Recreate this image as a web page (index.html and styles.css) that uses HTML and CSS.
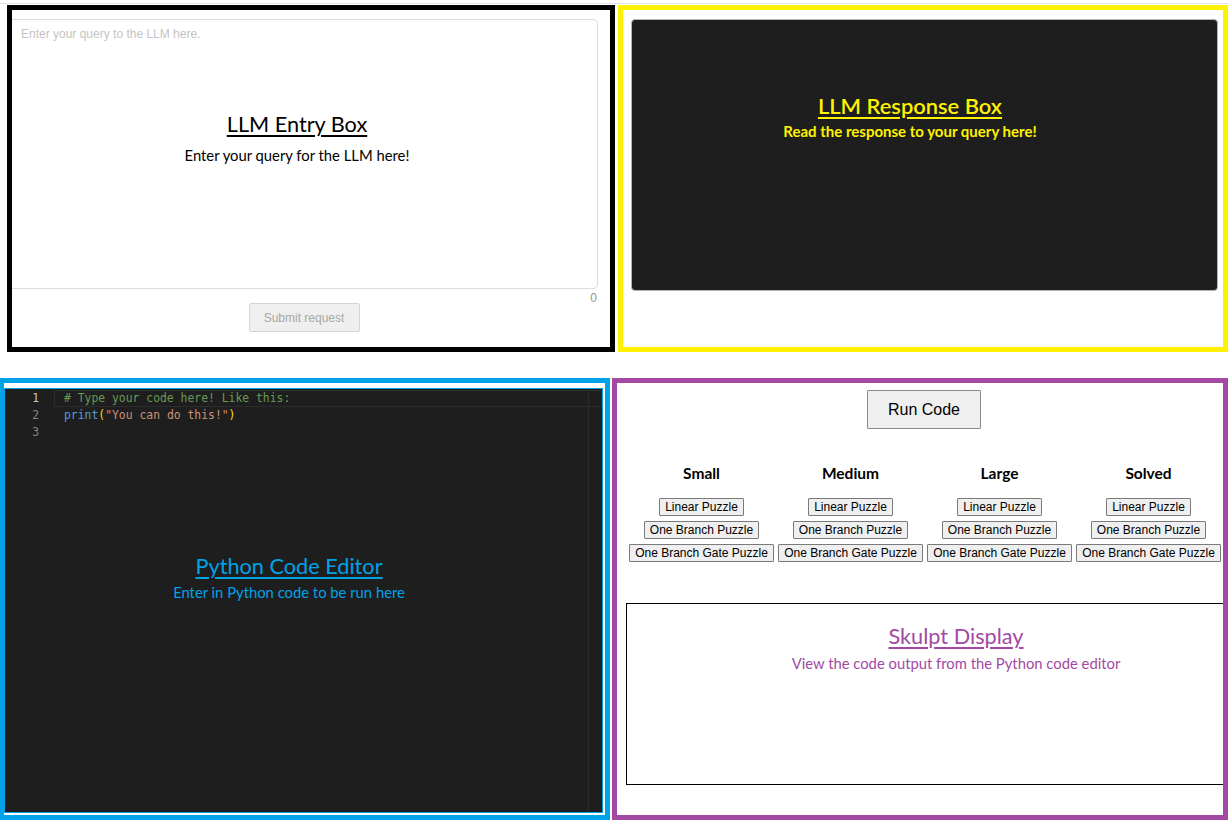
FILE: index.html
```html
<!DOCTYPE html>
<html lang="en">
<head>
<meta charset="utf-8">
<title>LLM + Python Workspace</title>
<link rel="stylesheet" href="styles.css">
</head>
<body>
<div class="topline"></div>
<div class="row row-top">
  <section class="panel panel-entry">
    <textarea class="query" placeholder="Enter your query to the LLM here."></textarea>
    <div class="counter">0</div>
    <div class="submit-wrap"><button class="submit" disabled>Submit request</button></div>
    <div class="label label-entry">
      <div class="label-title">LLM Entry Box</div>
      <div class="label-sub">Enter your query for the LLM here!</div>
    </div>
  </section>
  <section class="panel panel-response">
    <div class="response"></div>
    <div class="label label-response">
      <div class="label-title">LLM Response Box</div>
      <div class="label-sub">Read the response to your query here!</div>
    </div>
  </section>
</div>
<div class="row row-bottom">
  <section class="panel panel-editor">
    <div class="editor">
      <div class="gutter">
        <div class="ln ln-active">1</div>
        <div class="ln">2</div>
        <div class="ln">3</div>
      </div>
      <div class="code">
        <div class="cl cl-active"><span class="c-comment"># Type your code here! Like this:</span></div>
        <div class="cl"><span class="c-fn">print</span><span class="c-paren">(</span><span class="c-str">"You can do this!"</span><span class="c-paren">)</span></div>
        <div class="cl"></div>
      </div>
      <div class="scroll"></div>
    </div>
    <div class="label label-editor">
      <div class="label-title">Python Code Editor</div>
      <div class="label-sub">Enter in Python code to be run here</div>
    </div>
  </section>
  <section class="panel panel-skulpt">
    <div class="run-wrap"><button class="run">Run Code</button></div>
    <div class="puzzles">
      <div class="pcol">
        <div class="pcol-title">Small</div>
        <button class="pbtn">Linear Puzzle</button>
        <button class="pbtn">One Branch Puzzle</button>
        <button class="pbtn">One Branch Gate Puzzle</button>
      </div>
      <div class="pcol">
        <div class="pcol-title">Medium</div>
        <button class="pbtn">Linear Puzzle</button>
        <button class="pbtn">One Branch Puzzle</button>
        <button class="pbtn">One Branch Gate Puzzle</button>
      </div>
      <div class="pcol">
        <div class="pcol-title">Large</div>
        <button class="pbtn">Linear Puzzle</button>
        <button class="pbtn">One Branch Puzzle</button>
        <button class="pbtn">One Branch Gate Puzzle</button>
      </div>
      <div class="pcol">
        <div class="pcol-title">Solved</div>
        <button class="pbtn">Linear Puzzle</button>
        <button class="pbtn">One Branch Puzzle</button>
        <button class="pbtn">One Branch Gate Puzzle</button>
      </div>
    </div>
    <div class="display">
      <div class="label label-skulpt">
        <div class="label-title">Skulpt Display</div>
        <div class="label-sub">View the code output from the Python code editor</div>
      </div>
    </div>
  </section>
</div>
</body>
</html>
```

FILE: styles.css
```css
html, body {
  margin: 0;
  padding: 0;
  background: #ffffff;
}
body {
  width: 1228px;
  height: 831px;
  overflow: hidden;
  font-family: "Liberation Sans", Arial, sans-serif;
}
.topline {
  margin-top: 3px;
  height: 1px;
  background: #e2e2e2;
}
.row {
  display: flex;
}
.row-top {
  margin-top: 1px;
  height: 347px;
}
.row-bottom {
  margin-top: 26px;
  height: 442px;
}
.panel {
  position: relative;
  box-sizing: border-box;
  border: 5px solid #000;
  background: #fff;
}

/* ---------- LLM entry ---------- */
.panel-entry {
  margin-left: 7px;
  width: 608px;
  border-color: #000000;
  padding-top: 9px;
}
.query {
  display: block;
  box-sizing: border-box;
  width: 586px;
  height: 270px;
  margin: 0;
  border: 1px solid #dcdcdc;
  border-left: none;
  border-radius: 0 5px 5px 0;
  padding: 7px 9px;
  resize: none;
  font-family: "Liberation Sans", Arial, sans-serif;
  font-size: 12px;
  outline: none;
  background: #fff;
}
.query::placeholder {
  color: #c4c4c4;
}
.counter {
  width: 586px;
  box-sizing: border-box;
  margin-top: 3px;
  height: 12px;
  line-height: 12px;
  text-align: right;
  padding-right: 1px;
  font-size: 12px;
  color: #a09090;
}
.submit-wrap {
  width: 586px;
  text-align: center;
}
.submit {
  width: 111px;
  height: 29px;
  margin-top: -1px;
  margin-left: -2px;
  background: #efefef;
  border: 1px solid #d4d4d4;
  border-radius: 2px;
  color: #a8a8a8;
  font-family: "Liberation Sans", Arial, sans-serif;
  font-size: 12px;
}

/* ---------- labels ---------- */
.label {
  position: absolute;
  text-align: center;
  font-family: Lato, "Open Sans", sans-serif;
  pointer-events: none;
}
.label-title {
  font-size: 21.7px;
  line-height: 28px;
  text-decoration: underline;
  text-underline-offset: 3px;
  text-decoration-thickness: 2px;
}
.label-sub {
  font-size: 14.8px;
  line-height: 18px;
}
.label-entry {
  left: 0;
  width: 570px;
  top: 100px;
  color: #000;
}
.label-entry .label-sub {
  margin-top: 8px;
}

/* ---------- LLM response ---------- */
.panel-response {
  margin-left: 3px;
  width: 610px;
  border-color: #fff200;
  padding: 9px 5px 0 8px;
}
.response {
  box-sizing: border-box;
  height: 272px;
  background: #1e1e1e;
  border: 1px solid #b4b4b4;
  border-radius: 4px;
}
.label-response {
  left: 0;
  width: 574px;
  top: 82px;
  color: #fff200;
  font-weight: 700;
}
.label-response .label-title {
  font-weight: 600;
  font-size: 21.9px;
}
.label-response .label-sub {
  margin-top: 2px;
  font-size: 15px;
}

/* ---------- Python editor ---------- */
.panel-editor {
  margin-left: -1px;
  width: 611px;
  border-color: #00a2e8;
  padding-top: 5px;
}
.editor {
  box-sizing: border-box;
  width: 599px;
  height: 425px;
  border: 1px solid #00a2e8;
  background: #1e1e1e;
  display: flex;
  font-family: "DejaVu Sans Mono", "Liberation Mono", monospace;
  font-size: 11.4px;
}
.gutter {
  width: 34px;
  padding-top: 1px;
  text-align: right;
  color: #858585;
}
.ln {
  height: 17px;
  line-height: 17px;
}
.ln-active {
  color: #c6c6c6;
}
.code {
  flex: 1;
  margin-left: 15px;
  padding-top: 1px;
}
.cl {
  box-sizing: border-box;
  height: 17px;
  line-height: 15px;
  padding-left: 9px;
  border: 1px solid transparent;
  white-space: pre;
}
.cl-active {
  border-color: #2c2c2c;
  margin-right: -14px;
}
.c-comment { color: #6a9955; }
.c-fn { color: #569cd6; }
.c-paren { color: #ffd700; }
.c-str { color: #ce9178; }
.scroll {
  width: 13px;
  border-left: 1px solid #2a2a2a;
}
.label-editor {
  left: 0;
  width: 570px;
  top: 169px;
  color: #00a2e8;
}
.label-editor .label-sub {
  margin-top: 3px;
}

/* ---------- Skulpt panel ---------- */
.panel-skulpt {
  margin-left: 2px;
  width: 616px;
  border-color: #a349a4;
  overflow: hidden;
}
.run-wrap {
  padding-top: 7px;
  padding-left: 0;
  text-align: center;
  width: 606px;
  box-sizing: border-box;
  padding-right: 0;
}
.run {
  height: 39px;
  width: 114px;
  margin-left: 8px;
  background: #efefef;
  border: 1px solid #8a8a8a;
  border-radius: 1px;
  font-family: "Liberation Sans", Arial, sans-serif;
  font-size: 16px;
  color: #000;
}
.puzzles {
  margin-top: 34px;
  margin-left: 10px;
  display: grid;
  grid-template-columns: repeat(4, 149px);
}
.pcol {
  display: flex;
  flex-direction: column;
  align-items: center;
  gap: 5px;
}
.pcol-title {
  font-family: Lato, "Open Sans", sans-serif;
  font-weight: 700;
  font-size: 15.5px;
  line-height: 19px;
  margin-top: 1px;
  margin-bottom: 10px;
  color: #000;
}
.pbtn {
  height: 18px;
  padding: 0 5px;
  background: #efefef;
  border: 1px solid #7a7a7a;
  border-radius: 1px;
  font-family: "Liberation Sans", Arial, sans-serif;
  font-size: 12px;
  line-height: 14px;
  color: #000;
  white-space: nowrap;
}
.display {
  position: relative;
  box-sizing: border-box;
  margin-top: 41px;
  margin-left: 9px;
  width: 660px;
  height: 182px;
  border: 1px solid #000;
}
.label-skulpt {
  left: 0;
  right: 0;
  top: 18px;
  color: #a349a4;
}
.label-skulpt .label-sub {
  margin-top: 4px;
}
```
